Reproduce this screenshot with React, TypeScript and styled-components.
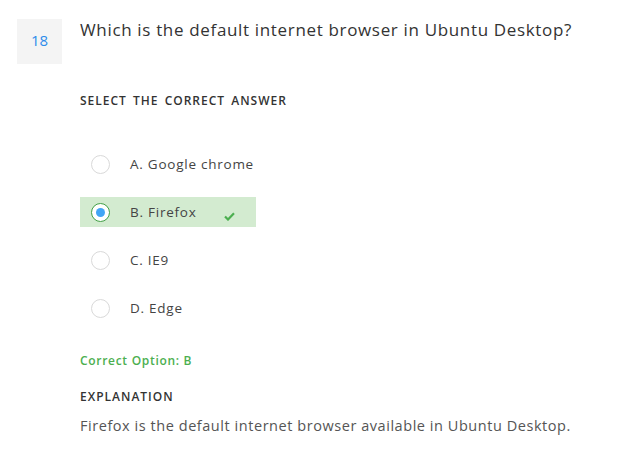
import React from "react";
import styled, { createGlobalStyle } from "styled-components";

const Global = createGlobalStyle`
  html, body { margin: 0; padding: 0; background: #ffffff; }
  body { font-family: "Open Sans", Lato, sans-serif; color: #333; }
`;

const Page = styled.div`
  display: flex;
  gap: 18px;
  padding: 19px 0 0 17px;
`;

const NumberBox = styled.div`
  width: 45px;
  height: 45px;
  box-sizing: border-box;
  padding-bottom: 3px;
  flex: none;
  background: #f4f4f4;
  color: #2d8ceb;
  font-size: 15px;
  display: flex;
  align-items: center;
  justify-content: center;
`;

const Content = styled.div`
  display: flex;
  flex-direction: column;
`;

const Title = styled.h1`
  margin: -1px 0 0;
  font-size: 17px;
  line-height: 24px;
  font-weight: 400;
  color: #333;
  letter-spacing: 0.66px;
`;

const Label = styled.div<{ $top: number }>`
  margin-top: ${(p) => p.$top}px;
  font-size: 12px;
  line-height: 14px;
  font-weight: 600;
  color: #333;
  letter-spacing: 1px;
  word-spacing: 2px;
  text-transform: uppercase;
`;

const Options = styled.div`
  display: flex;
  flex-direction: column;
  gap: 18px;
  margin-top: 41px;
`;

const OptionRow = styled.div<{ $correct?: boolean }>`
  width: 176px;
  height: 30px;
  box-sizing: border-box;
  padding: 0 21px 0 11px;
  display: flex;
  align-items: center;
  background: ${(p) => (p.$correct ? "#d3ebd0" : "transparent")};
`;

const Radio = styled.span<{ $checked?: boolean }>`
  width: 19px;
  height: 19px;
  box-sizing: border-box;
  border-radius: 50%;
  border: 1px solid ${(p) => (p.$checked ? "#43a047" : "#d9d9d9")};
  background: #fff;
  display: flex;
  align-items: center;
  justify-content: center;
  flex: none;
  &::after {
    content: "";
    display: ${(p) => (p.$checked ? "block" : "none")};
    width: 9px;
    height: 9px;
    border-radius: 50%;
    background: #42a5f5;
  }
`;

const OptionText = styled.span`
  margin-left: 20px;
  font-size: 13.5px;
  color: #444;
  letter-spacing: 0.75px;
  white-space: nowrap;
`;

const Check = styled.svg`
  margin-left: auto;
  margin-top: 8px;
  flex: none;
`;

const CorrectText = styled.div`
  margin-top: 31px;
  font-size: 12px;
  line-height: 14px;
  font-weight: 600;
  color: #4caf50;
  letter-spacing: 0.7px;
`;

const Explanation = styled.p`
  margin: 12px 0 0;
  font-size: 14.5px;
  line-height: 20px;
  color: #555;
  letter-spacing: 0.55px;
`;

const options = [
  { key: "A", text: "Google chrome" },
  { key: "B", text: "Firefox", correct: true },
  { key: "C", text: "IE9" },
  { key: "D", text: "Edge" },
];

export default function App() {
  return (
    <>
      <Global />
      <Page>
        <NumberBox>18</NumberBox>
        <Content>
          <Title>Which is the default internet browser in Ubuntu Desktop?</Title>
          <Label $top={52}>Select the correct answer</Label>
          <Options>
            {options.map((o) => (
              <OptionRow key={o.key} $correct={o.correct}>
                <Radio $checked={o.correct} />
                <OptionText>
                  {o.key}. {o.text}
                </OptionText>
                {o.correct && (
                  <Check width="11" height="9" viewBox="0 0 11 9">
                    <path d="M1 4.5 L4 7.5 L10 1.2" fill="none" stroke="#4caf50" strokeWidth="2.2" />
                  </Check>
                )}
              </OptionRow>
            ))}
          </Options>
          <CorrectText>Correct Option: B</CorrectText>
          <Label $top={22}>Explanation</Label>
          <Explanation>Firefox is the default internet browser available in Ubuntu Desktop.</Explanation>
        </Content>
      </Page>
    </>
  );
}
